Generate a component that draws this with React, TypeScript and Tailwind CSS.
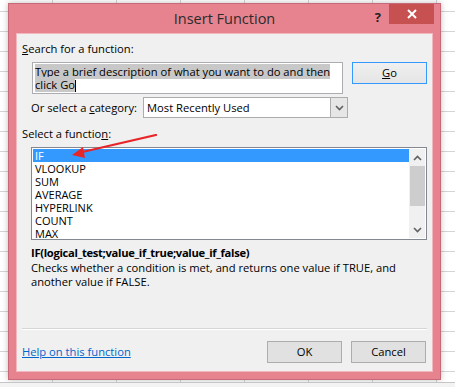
import React from 'react';

const font = "font-['Open_Sans',sans-serif]";

const functions = ['IF', 'VLOOKUP', 'SUM', 'AVERAGE', 'HYPERLINK', 'COUNT', 'MAX'];

function Chevron({ down }: { down?: boolean }) {
  return (
    <svg width="9" height="6" viewBox="0 0 9 6">
      <path
        d={down ? 'M1 1 L4.5 4.5 L8 1' : 'M1 5 L4.5 1.5 L8 5'}
        fill="none"
        stroke="#606060"
        strokeWidth="1.6"
      />
    </svg>
  );
}

export default function App() {
  return (
    <div
      className={`w-[455px] h-[387px] overflow-hidden bg-white flex flex-col ${font} text-[11.2px] text-black [background-image:linear-gradient(to_right,#d4d4d4_1px,transparent_1px),linear-gradient(to_bottom,#d4d4d4_1px,transparent_1px)] [background-size:64px_20px] [background-position:52px_11px]`}
    >
      {/* dialog window */}
      <div className="ml-[8px] mt-[3px] w-[433px] h-[377px] border border-[#c76977] bg-[#e6838f] px-[7px] pb-[7px] flex flex-col shadow-[0_0_6px_rgba(0,0,0,0.25)]">
        {/* title bar */}
        <div className="relative h-[29px] shrink-0">
          <div className="absolute inset-x-0 top-[4px] text-center text-[14.5px] text-[#2b2b2b] leading-[22px]">
            Insert Function
          </div>
          <div className="absolute right-[52px] top-[5px] text-[13px] font-bold text-[#222] leading-[16px]">?</div>
          <div className="absolute right-[-1px] top-0 w-[45px] h-[20px] bg-[#c75050] flex items-center justify-center">
            <svg width="10" height="10" viewBox="0 0 10 10">
              <path d="M1 1 L9 9 M9 1 L1 9" stroke="#fff" strokeWidth="2" />
            </svg>
          </div>
        </div>

        {/* content panel */}
        <div className="flex-1 bg-[#f0f0f0] border border-[#f2b8c0] flex flex-col">
          <div className="ml-[5px] mt-[7px] leading-[16px]">
            <span className="underline">S</span>earch for a function:
          </div>

          <div className="flex mt-[5px] ml-[15px]">
            <div className="w-[311px] h-[32px] border border-[#abadb3] bg-white px-[2px] pt-[2px] leading-[13px]">
              <span className="bg-[#c8c8c8]">Type a brief description of what you want to do and then</span>
              <br />
              <span className="bg-[#c8c8c8]">click Go</span>
              <span className="inline-block w-px h-[12px] bg-black align-middle" />
            </div>
            <div className="ml-[9px] w-[75px] h-[22px] border border-[#3399ff] bg-[linear-gradient(#f0f0f0,#e5e5e5)] flex items-center justify-center">
              <span>
                <span className="underline">G</span>o
              </span>
            </div>
          </div>

          <div className="flex items-center mt-[3px] ml-[14px]">
            <span className="leading-[16px]">
              Or select a <span className="underline">c</span>ategory:
            </span>
            <div className="ml-[6px] w-[205px] h-[21px] border border-[#acacac] bg-white flex">
              <div className="flex-1 pl-[3px] leading-[19px]">Most Recently Used</div>
              <div className="w-[17px] border-l border-[#acacac] bg-[#e6e6e6] flex items-center justify-center">
                <Chevron down />
              </div>
            </div>
          </div>

          <div className="ml-[5px] mt-[8px] leading-[16px]">
            Select a functio<span className="underline">n</span>:
          </div>

          <div className="relative ml-[14px] mt-[5px] w-[396px] h-[93px] border border-[#828790] bg-white flex p-px">
            <div className="flex-1 flex flex-col text-[11px]">
              {functions.map((f, i) => (
                <div
                  key={f}
                  className={`h-[13px] leading-[13px] pl-[2px] ${i === 0 ? 'bg-[#3399ff] text-white' : ''}`}
                >
                  {f}
                </div>
              ))}
            </div>
            <div className="w-[16px] bg-[#f0f0f0] flex flex-col items-center">
              <div className="h-[17px] flex items-center justify-center">
                <Chevron />
              </div>
              <div className="w-[15px] h-[40px] bg-[#cdcdcd]" />
              <div className="flex-1" />
              <div className="h-[17px] flex items-center justify-center">
                <Chevron down />
              </div>
            </div>
            {/* annotation arrow */}
            <svg className="absolute left-[36px] top-[-14px]" width="90" height="28" viewBox="0 0 90 28">
              <path d="M88 1 L10 19" stroke="#e8262a" strokeWidth="2.2" strokeLinecap="round" />
              <path d="M4 21 L15 13 L17 24 Z" fill="#e8262a" />
            </svg>
          </div>

          <div className="ml-[14px] mt-[6px] font-bold tracking-[-0.3px] leading-[14px]">
            IF(logical_test;value_if_true;value_if_false)
          </div>
          <div className="ml-[14px] mt-[1px] leading-[14px] w-[380px]">
            Checks whether a condition is met, and returns one value if TRUE, and
            <br />
            another value if FALSE.
          </div>

          <div className="mx-[5px] mt-[39px] h-[2px] border-t border-[#d5d5d5] border-b border-b-white" />

          <div className="flex items-center mt-[11px] ml-[5px]">
            <span className="text-[#0066cc] underline leading-[16px]">Help on this function</span>
            <div className="flex-1" />
            <div className="w-[75px] h-[22px] border border-[#adadad] bg-[#e1e1e1] flex items-center justify-center">
              OK
            </div>
            <div className="ml-[9px] mr-[6px] w-[75px] h-[22px] border border-[#adadad] bg-[#e1e1e1] flex items-center justify-center">
              Cancel
            </div>
          </div>
        </div>
      </div>

      <div className="mt-[2px] flex-1 bg-[#f3f3f3] border-t border-[#c6c6c6]" />
    </div>
  );
}
